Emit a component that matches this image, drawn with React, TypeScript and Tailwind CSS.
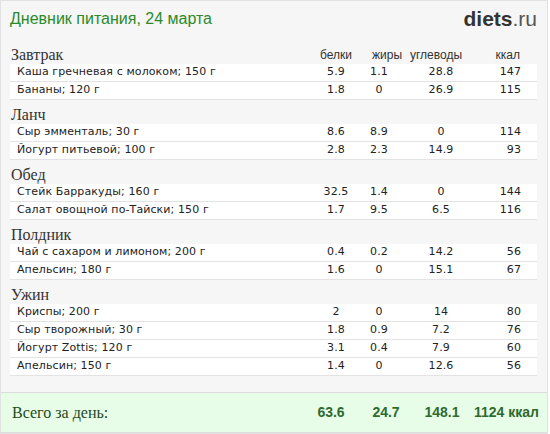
import React from 'react'

type Item = { name: string; p: string; f: string; c: string; k: string }

const MEALS: { title: string; items: Item[] }[] = [
  {
    title: 'Завтрак',
    items: [
      { name: 'Каша гречневая с молоком; 150 г', p: '5.9', f: '1.1', c: '28.8', k: '147' },
      { name: 'Бананы; 120 г', p: '1.8', f: '0', c: '26.9', k: '115' },
    ],
  },
  {
    title: 'Ланч',
    items: [
      { name: 'Сыр эмменталь; 30 г', p: '8.6', f: '8.9', c: '0', k: '114' },
      { name: 'Йогурт питьевой; 100 г', p: '2.8', f: '2.3', c: '14.9', k: '93' },
    ],
  },
  {
    title: 'Обед',
    items: [
      { name: 'Стейк Барракуды; 160 г', p: '32.5', f: '1.4', c: '0', k: '144' },
      { name: 'Салат овощной по-Тайски; 150 г', p: '1.7', f: '9.5', c: '6.5', k: '116' },
    ],
  },
  {
    title: 'Полдник',
    items: [
      { name: 'Чай с сахаром и лимоном; 200 г', p: '0.4', f: '0.2', c: '14.2', k: '56' },
      { name: 'Апельсин; 180 г', p: '1.6', f: '0', c: '15.1', k: '67' },
    ],
  },
  {
    title: 'Ужин',
    items: [
      { name: 'Криспы; 200 г', p: '2', f: '0', c: '14', k: '80' },
      { name: 'Сыр творожный; 30 г', p: '1.8', f: '0.9', c: '7.2', k: '76' },
      { name: 'Йогурт Zottis; 120 г', p: '3.1', f: '0.4', c: '7.9', k: '60' },
      { name: 'Апельсин; 150 г', p: '1.4', f: '0', c: '12.6', k: '56' },
    ],
  },
]

const GRID = 'grid grid-cols-[300px_52px_34px_90px_51px]'

export default function App() {
  return (
    <div className="w-[550px] h-[434px] bg-white">
      <div className="w-[548px] h-[434px] bg-[#f6f6f6] border border-[#e2e2e2] flex flex-col">
        {/* Header */}
        <div className="h-[39px] pl-[9px] pr-[10px] flex items-center justify-between">
          <span className="font-['Liberation_Sans',sans-serif] text-[16px] text-[#2b8a2b] -mt-[4px]">
            Дневник питания, 24 марта
          </span>
          <span className="font-['Liberation_Sans',sans-serif] text-[21px] text-[#333] -mt-[4px]">
            <b>diets</b>
            <span className="text-[#555]">.ru</span>
          </span>
        </div>

        {/* Meals */}
        <div className="pl-[9px] pr-[10px]">
          {MEALS.map((meal, i) => (
            <div key={meal.title}>
              <div className={`${GRID} h-[24px] items-start pt-[6px] leading-[18px]`}>
                <span className="pl-[1px] font-['Liberation_Serif',serif] text-[16px] text-[#333]">
                  {meal.title}
                </span>
                {i === 0 && (
                  <>
                    <span className="text-center font-['Liberation_Sans',sans-serif] text-[12px] text-[#333]">белки</span>
                    <span className="text-center pl-[10px] font-['Liberation_Sans',sans-serif] text-[12px] text-[#333]">жиры</span>
                    <span className="text-center pr-[10px] font-['Liberation_Sans',sans-serif] text-[12px] text-[#333]">углеводы</span>
                    <span className="text-right pr-[17px] font-['Liberation_Sans',sans-serif] text-[12px] text-[#333]">ккал</span>
                  </>
                )}
              </div>
              {meal.items.map((it) => (
                <div
                  key={it.name}
                  className={`${GRID} h-[18px] items-center bg-white border-b border-[#e3e3e3] font-['DejaVu_Sans',sans-serif] text-[11px] tracking-[0.1px] text-[#222]`}
                >
                  <span className="pl-[7px] whitespace-nowrap">{it.name}</span>
                  <span className="text-center">{it.p}</span>
                  <span className="text-center">{it.f}</span>
                  <span className="text-center">{it.c}</span>
                  <span className="text-right pr-[16px]">{it.k}</span>
                </div>
              ))}
            </div>
          ))}
        </div>

        {/* Totals */}
        <div className="mt-[16px] h-[41px] bg-[#e8fde8] border-y border-[#dcdcdc] pl-[9px] pr-[10px] grid grid-cols-[290px_62px_48px_64px_63px] items-center">
          <span className="pl-[2px] font-['Liberation_Serif',serif] text-[16px] text-[#1d4a1d]">Всего за день:</span>
          <span className="text-center font-['Liberation_Sans',sans-serif] font-bold text-[14px] text-[#2f6a2f]">63.6</span>
          <span className="text-center font-['Liberation_Sans',sans-serif] font-bold text-[14px] text-[#2f6a2f]">24.7</span>
          <span className="text-center font-['Liberation_Sans',sans-serif] font-bold text-[14px] text-[#2f6a2f]">148.1</span>
          <span className="text-right whitespace-nowrap font-['Liberation_Sans',sans-serif] font-bold text-[14px] text-[#2f6a2f]">1124 ккал</span>
        </div>
      </div>
    </div>
  )
}
